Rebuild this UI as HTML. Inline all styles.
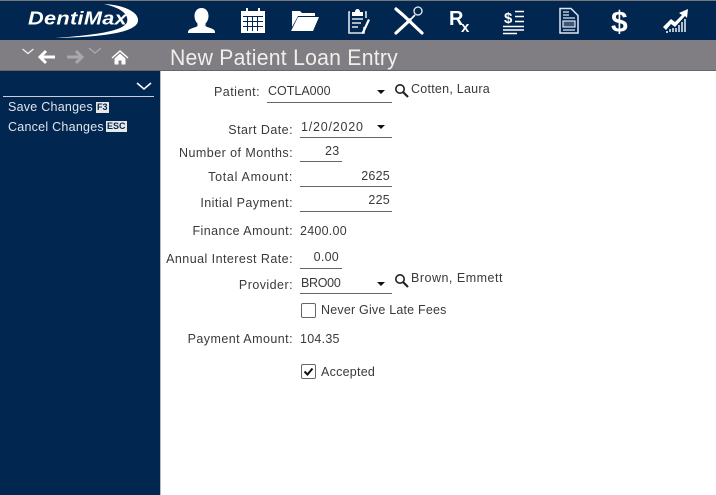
<!DOCTYPE html>
<html><head><meta charset="utf-8"><style>
html,body{margin:0;padding:0;background:#fff}
body{width:716px;height:495px;position:relative;overflow:hidden;font-family:"Liberation Sans",sans-serif;font-size:12.5px;color:#3a3a3a;letter-spacing:.25px}
div{position:absolute;white-space:nowrap}
.l{right:423px;text-align:right;line-height:16px;letter-spacing:.45px}
.v{line-height:16px}
.u{height:1px;background:#666}
.a{width:0;height:0;border-left:4px solid transparent;border-right:4px solid transparent;border-top:4px solid #111}
.k{background:#e8e8e8;color:#002850;font-size:9px;font-weight:bold;line-height:11px;height:11px;padding:0 1px;letter-spacing:0}
</style></head><body>
<div style="left:0;top:0;width:716px;height:40px;background:#012650;border-top:1px solid #777;box-sizing:border-box"></div>
<div style="left:0;top:40px;width:716px;height:31px;background:#807e83;border-bottom:1px solid #666;box-sizing:border-box"></div>
<div style="left:0;top:71px;width:160px;height:424px;background:#012650"></div>
<div style="left:160px;top:71px;width:1px;height:424px;background:#bbb"></div>

<svg style="position:absolute;left:0;top:0" width="716" height="72" viewBox="0 0 716 72">
<path d="M104 4C126 5 139 13 138 21C137 31 110 37 55 38C96 35 124 31 127 22C129 15 122 8 104 4Z" fill="#fff"/>
<text x="28" y="24.500" font-family="Liberation Sans" font-size="18" font-weight="bold" font-style="italic" fill="#fff" textLength="99" lengthAdjust="spacingAndGlyphs">DentiMax</text>

<!-- person -->
<path d="M201.500 8c4.500 0 7 3.500 7 8 0 3.500-1.500 6-3 7.500v2.500c2 1.800 7.500 2 9 4.500.5.800.5 1.500.5 2.500h-27c0-1 0-1.700.5-2.500 1.500-2.500 7-2.700 9-4.500v-2.500c-1.500-1.500-3-4-3-7.500 0-4.500 2.500-8 7-8z" fill="#fff"/>
<!-- calendar -->
<g fill="#fff"><rect x="241" y="11" width="24" height="22"/><rect x="246" y="8" width="2" height="6"/><rect x="258" y="8" width="2" height="6"/></g>
<g fill="#012650"><rect x="243" y="16" width="20" height="1"/><rect x="247" y="17" width="1" height="14"/><rect x="252" y="17" width="1" height="14"/><rect x="257" y="17" width="1" height="14"/><rect x="243" y="21" width="20" height="1"/><rect x="243" y="26" width="20" height="1"/></g>
<!-- folder -->
<path d="M292 11h8l2 2h13v3h-17l-6 11z" fill="#fff"/><path d="M298 17h21l-6 14h-22z" fill="#fff"/>
<!-- clipboard -->
<path d="M352 12h3c0-4 5-4 5 0h3v4h-11z" fill="#fff"/>
<path d="M350 12h-1v21h15v-6M365 12h1v6" stroke="#dfe6ee" fill="none" stroke-width="1.600"/>
<path d="M352 19h11M352 23h9M352 27h6" stroke="#dfe6ee" stroke-width="1.400"/>
<path d="M362 32l6-13 2 1-6 13-2 1z" fill="#fff"/>
<!-- tools -->
<path d="M396 33l14-13M396 9l7 6 19 18" stroke="#fff" stroke-width="3.200" fill="none" stroke-linecap="round"/>
<path d="M410 20l5-5" stroke="#fff" stroke-width="1.600"/>
<circle cx="418" cy="11" r="4" fill="none" stroke="#e8edf3" stroke-width="1.300"/>
<!-- Rx -->
<text x="449" y="25" font-family="Liberation Sans" font-size="20" font-weight="bold" fill="#fff">R</text>
<text x="461" y="32" font-family="Liberation Sans" font-size="15" font-weight="bold" fill="#fff">x</text>
<!-- $ lines -->
<text x="504" y="23" font-family="Liberation Sans" font-size="15" font-weight="bold" fill="#fff">$</text>
<path d="M515 11.500h9M515 16.500h9M515 21.500h9M503 26.500h21M503 30h21M503 33.500h14" stroke="#fff" stroke-width="1.600"/>
<!-- document -->
<path d="M560 8.500h11l7 7v17.500h-18z" fill="#012650" stroke="#dfe6ee" stroke-width="1.500"/>
<path d="M563 12h6M563 15h6M563 18h12M563 30h12" stroke="#dfe6ee" stroke-width="1.300"/>
<rect x="563" y="21" width="12" height="6" fill="#3d5878" stroke="#dfe6ee" stroke-width="1.200"/>
<!-- dollar -->
<text x="611" y="32" font-family="Liberation Sans" font-size="30" font-weight="bold" fill="#fff">$</text>
<!-- chart -->
<path d="M663 27l8-8 4 3 7-7-3-2 9-4-1 9-2-2-10 11-4-3-5 6z" fill="#fff"/>
<path d="M666 32h2M670 29v3M673 28v4M676 28v4M679 25v7M682 22v10M685 19v13" stroke="#fff" stroke-width="1.400" fill="none"/>

<!-- nav -->
<path d="M22.500 49l5.500 4.500 5.500-4.500" stroke="#eee" stroke-width="1.300" fill="none"/>
<path d="M55 57H41M46 51l-6 6 6 6" stroke="#fff" stroke-width="3" fill="none"/>
<path d="M67 57h14M76 51l6 6-6 6" stroke="#a9a8ab" stroke-width="3" fill="none"/>
<path d="M89 48l6 5 6-5" stroke="#a9a8ab" stroke-width="1.300" fill="none"/>
<path d="M120 50l-8.500 7.500 1 1 7.500-6.500 7.500 6.500 1-1z" fill="#fff"/>
<path d="M114.500 58.500l5.500-5 5.500 5v6h-4v-4h-3v4h-4z" fill="#fff"/>
<text x="170" y="65" font-family="Liberation Sans" font-size="22" fill="#f1efec" textLength="228" lengthAdjust="spacingAndGlyphs">New Patient Loan Entry</text>
</svg>

<!-- sidebar -->
<svg style="position:absolute;left:136px;top:82px" width="18" height="10"><path d="M1 1l7 6 7-6" stroke="#fff" stroke-width="1.500" fill="none"/></svg>
<div style="left:3px;top:96px;width:151px;height:1px;background:#ccd"></div>
<div style="left:8px;top:99px;color:#dfe4ea;line-height:16px">Save Changes</div>
<div class="k" style="left:96px;top:102px">F3</div>
<div style="left:8px;top:119px;color:#dfe4ea;line-height:16px">Cancel Changes</div>
<div class="k" style="left:106px;top:121px">ESC</div>

<!-- form -->
<div class="l" style="top:84px;right:456px">Patient:</div>
<div class="v" style="left:268px;top:83px;letter-spacing:0">COTLA000</div>
<div class="a" style="left:377px;top:90px"></div>
<div class="u" style="left:267px;top:102px;width:125px"></div>
<svg style="position:absolute;left:394px;top:83px" width="16" height="16"><circle cx="6" cy="6" r="4.200" fill="none" stroke="#222" stroke-width="1.600"/><path d="M9 9l5 5" stroke="#222" stroke-width="2.200"/></svg>
<div class="v" style="left:411px;top:81px">Cotten, Laura</div>

<div class="l" style="top:122px">Start Date:</div>
<div class="v" style="left:301px;top:119px;letter-spacing:.8px">1/20/2020</div>
<div class="a" style="left:377px;top:125px"></div>
<div class="u" style="left:300px;top:137px;width:92px"></div>

<div class="l" style="top:145px">Number of Months:</div>
<div class="v" style="left:325px;top:143px">23</div>
<div class="u" style="left:300px;top:161px;width:42px"></div>

<div class="l" style="top:169px;letter-spacing:.7px">Total Amount:</div>
<div class="v" style="right:326px;top:168px">2625</div>
<div class="u" style="left:300px;top:186px;width:92px"></div>

<div class="l" style="top:195px">Initial Payment:</div>
<div class="v" style="right:326px;top:192px">225</div>
<div class="u" style="left:300px;top:211px;width:92px"></div>

<div class="l" style="top:223px">Finance Amount:</div>
<div class="v" style="left:300px;top:223px">2400.00</div>

<div class="l" style="top:251px">Annual Interest Rate:</div>
<div class="v" style="right:377px;top:249px">0.00</div>
<div class="u" style="left:300px;top:268px;width:42px"></div>

<div class="l" style="top:277px">Provider:</div>
<div class="v" style="left:301px;top:275px;letter-spacing:-.3px">BRO00</div>
<div class="a" style="left:377px;top:282px"></div>
<div class="u" style="left:300px;top:293px;width:92px"></div>
<svg style="position:absolute;left:394px;top:273px" width="16" height="16"><circle cx="6" cy="6" r="4.200" fill="none" stroke="#222" stroke-width="1.600"/><path d="M9 9l5 5" stroke="#222" stroke-width="2.200"/></svg>
<div class="v" style="left:411px;top:270px;letter-spacing:.5px">Brown, Emmett</div>

<div style="left:301px;top:303px;width:13px;height:13px;border:1px solid #666;border-radius:2px"></div>
<div class="v" style="left:321px;top:302px;letter-spacing:.2px">Never Give Late Fees</div>

<div class="l" style="top:331px">Payment Amount:</div>
<div class="v" style="left:300px;top:331px">104.35</div>

<div style="left:301px;top:364px;width:13px;height:13px;border:1px solid #666;border-radius:2px"></div>
<svg style="position:absolute;left:302px;top:365px" width="13" height="13"><path d="M2.500 6.500l3 3 5-6" stroke="#111" stroke-width="2" fill="none"/></svg>
<div class="v" style="left:321px;top:364px">Accepted</div>
</body></html>
